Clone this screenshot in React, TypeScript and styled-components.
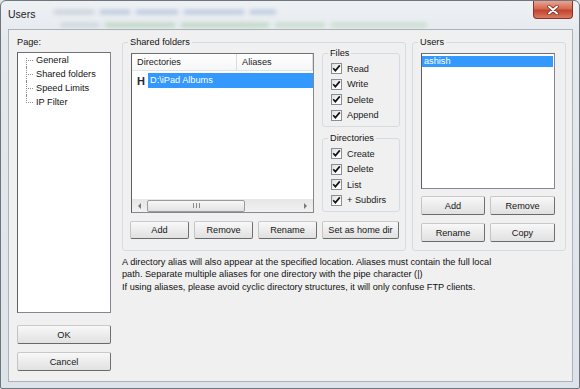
import React from 'react'
import styled, { createGlobalStyle } from 'styled-components'

const GlobalStyle = createGlobalStyle`
  html, body {
    margin: 0;
    padding: 0;
    background: #dfe5ea;
  }
  body {
    font-family: "Liberation Sans", Arial, sans-serif;
    font-size: 9.2px;
    color: #141414;
  }
  * {
    box-sizing: border-box;
  }
`

const Frame = styled.div`
  width: 580px;
  height: 389px;
  border: 1px solid #6f757c;
  border-radius: 6px 6px 2px 2px;
  background: linear-gradient(#eef1f4, #e4e9ee 40px, #dde3e8);
  display: flex;
  flex-direction: column;
  padding: 0 6px 6px 7px;
  overflow: hidden;
`

const TitleBar = styled.div`
  height: 28px;
  flex: none;
  display: flex;
  align-items: flex-start;
`

const Title = styled.div`
  padding-top: 7px;
  font-size: 10.5px;
  line-height: 12px;
  color: #1b1b1b;
`

const Haze = styled.div`
  display: flex;
  flex-direction: column;
  gap: 9px;
  margin-left: 19px;
  padding-top: 9px;
  filter: blur(2px);
  opacity: 0.55;
`

const HazeLine = styled.div<{ indent: number }>`
  display: flex;
  gap: 6px;
  margin-left: ${p => p.indent}px;
`

const HazeBit = styled.span<{ w: number; c: string }>`
  width: ${p => p.w}px;
  height: 4px;
  background: ${p => p.c};
`

const CloseButton = styled.div`
  margin-left: auto;
  width: 40px;
  height: 18px;
  border: 1px solid #8b3426;
  border-top: none;
  border-radius: 0 0 4px 4px;
  background: linear-gradient(#e9a594, #d46a53 45%, #c4432d 55%, #d77a62);
  display: flex;
  align-items: center;
  justify-content: center;
`

const Client = styled.div`
  flex: 1;
  display: flex;
  gap: 11px;
  background: #f0f0f0;
  border: 1px solid #aab3bb;
  padding: 6px 6px 0 8px;
`

const LeftCol = styled.div`
  width: 94px;
  flex: none;
  display: flex;
  flex-direction: column;
`

const Label = styled.div`
  line-height: 12px;
`

const Sunken = styled.div`
  background: #fff;
  border: 1px solid #828790;
  border-left-color: #5d6167;
  border-top-color: #6d7178;
`

const TreeBox = styled(Sunken)`
  margin-top: 4px;
  height: 261px;
  padding: 0 0 0 8px;
`

const TreeItem = styled.div`
  position: relative;
  height: 14px;
  line-height: 14px;
  padding-left: 10px;
  white-space: nowrap;
  &::before {
    content: "";
    position: absolute;
    left: 0;
    top: 7px;
    width: 7px;
    border-top: 1px dotted #8c8c8c;
  }
  &::after {
    content: "";
    position: absolute;
    left: 0;
    top: 0;
    height: 14px;
    border-left: 1px dotted #8c8c8c;
  }
  &:first-child::after {
    top: 5px;
    height: 9px;
  }
  &:last-child::after {
    height: 8px;
  }
`

const Button = styled.div<{ w?: number; h?: number }>`
  width: ${p => (p.w ? `${p.w}px` : '100%')};
  height: ${p => p.h || 18}px;
  flex: none;
  display: flex;
  align-items: center;
  justify-content: center;
  border: 1px solid;
  border-color: #c9c9c9 #6f6f6f #6a6a6a #c4c4c4;
  border-radius: 2px;
  background: linear-gradient(#f8f8f8, #ececec 50%, #e1e1e1);
  color: #161616;
  white-space: nowrap;
`

const OkButton = styled(Button)`
  margin-top: 12px;
`

const CancelButton = styled(Button)`
  margin-top: 8px;
`

const RightCol = styled.div`
  flex: 1;
  display: flex;
  flex-direction: column;
`

const TopRow = styled.div`
  display: flex;
  gap: 6px;
`

const Group = styled.fieldset<{ w: number }>`
  width: ${p => p.w}px;
  min-width: 0;
  margin: 0;
  border: 1px solid #d3dce2;
  border-radius: 3px;
  padding: 5px 5px 8px 8px;
`

const Legend = styled.legend`
  line-height: 12px;
  padding: 0 2px;
  margin-left: -3px;
  color: #141414;
`

const SharedInner = styled.div`
  display: flex;
  align-items: flex-start;
  gap: 8px;
`

const ListView = styled(Sunken)`
  width: 183px;
  height: 160px;
  display: flex;
  flex-direction: column;
`

const Header = styled.div`
  display: flex;
  height: 17px;
  flex: none;
  border-bottom: 1px solid #e3e3e3;
  background: linear-gradient(#ffffff, #f6f7f8);
`

const HeaderCell = styled.div<{ w?: number }>`
  ${p => (p.w ? `width: ${p.w}px;` : 'flex: 1;')}
  padding-left: 5px;
  line-height: 16px;
  color: #222;
  border-right: 1px solid #dcdcdc;
`

const DirRow = styled.div`
  display: flex;
  align-items: center;
  height: 15px;
  margin-top: 2px;
`

const HomeMark = styled.span`
  width: 16px;
  padding-left: 5px;
  font-size: 11px;
  font-weight: bold;
  color: #1d2a3a;
`

const Selected = styled.div`
  flex: 1;
  height: 15px;
  line-height: 15px;
  padding-left: 2px;
  background: #3399ff;
  color: #fff;
  white-space: nowrap;
`

const HScroll = styled.div`
  margin-top: auto;
  height: 13px;
  flex: none;
  display: flex;
  align-items: center;
  background: linear-gradient(#e6e6e6, #f1f1f1);
`

const Arrow = styled.div<{ dir: 'left' | 'right' }>`
  width: 15px;
  height: 13px;
  display: flex;
  align-items: center;
  justify-content: center;
  ${p => (p.dir === 'right' ? 'margin-left: auto;' : '')}
  &::before {
    content: "";
    border-top: 3px solid transparent;
    border-bottom: 3px solid transparent;
    ${p =>
      p.dir === 'left'
        ? 'border-right: 3px solid #7a7a7a;'
        : 'border-left: 3px solid #7a7a7a;'}
  }
`

const Thumb = styled.div`
  width: 98px;
  height: 12px;
  border: 1px solid #9b9b9b;
  border-radius: 2px;
  background: linear-gradient(#f7f7f7, #e2e2e2);
  display: flex;
  align-items: center;
  justify-content: center;
  gap: 2px;
`

const Grip = styled.span`
  width: 1px;
  height: 5px;
  background: #8a8a8a;
`

const SideCol = styled.div`
  width: 78px;
  margin-top: -6px;
  display: flex;
  flex-direction: column;
  gap: 5px;
`

const SmallGroup = styled.fieldset`
  min-width: 0;
  margin: 0;
  border: 1px solid #d3dce2;
  border-radius: 3px;
  padding: 2px 2px 3px 8px;
`

const CheckRow = styled.div`
  display: flex;
  align-items: center;
  gap: 5px;
  height: 15.5px;
  white-space: nowrap;
  color: #1a1a1a;
`

const Box = styled.span`
  width: 11px;
  height: 11px;
  flex: none;
  border: 1px solid #8a8d91;
  background: linear-gradient(135deg, #dadde0, #ffffff 70%);
  display: flex;
  align-items: center;
  justify-content: center;
`

const ButtonRow = styled.div<{ top: number; gap: number }>`
  display: flex;
  gap: ${p => p.gap}px;
  margin-top: ${p => p.top}px;
`

const SharedButtons = styled(ButtonRow)`
  margin-left: -1px;
`

const UserList = styled(Sunken)`
  width: 134px;
  height: 136px;
  padding: 2px 1px 0 0;
`

const UserItem = styled.div`
  height: 11px;
  line-height: 11px;
  padding-left: 2px;
  background: #3399ff;
  color: #fff;
`

const Notes = styled.div`
  margin-top: 5px;
  width: 385px;
  line-height: 12px;
  color: #111;
`

const NoteLine = styled.p<{ top?: number }>`
  margin: ${p => p.top || 0}px 0 0 0;
`

const Check: React.FC<{ text: string }> = ({ text }) => (
  <CheckRow>
    <Box>
      <svg width="9" height="9" viewBox="0 0 9 9">
        <path d="M1.2 4.2 L3.4 6.6 L7.8 1.4" stroke="#151515" strokeWidth="1.7" fill="none" />
      </svg>
    </Box>
    {text}
  </CheckRow>
)

const App: React.FC = () => {
  return (
    <>
      <GlobalStyle />
      <Frame>
        <TitleBar>
          <Title>Users</Title>
          <Haze>
            <HazeLine indent={0}>
              <HazeBit w={40} c="#a7b5c4" />
              <HazeBit w={30} c="#8aa3cc" />
              <HazeBit w={42} c="#8aa3cc" />
              <HazeBit w={60} c="#8aa3cc" />
              <HazeBit w={26} c="#8aa3cc" />
            </HazeLine>
            <HazeLine indent={7}>
              <HazeBit w={38} c="#b1c0cc" />
              <HazeBit w={70} c="#94c294" />
              <HazeBit w={88} c="#94c294" />
              <HazeBit w={50} c="#a6cba6" />
              <HazeBit w={96} c="#a6cbad" />
            </HazeLine>
          </Haze>
          <CloseButton>
            <svg width="12" height="10" viewBox="0 0 12 10">
              <path d="M2 1.5 L10 8.5 M10 1.5 L2 8.5" stroke="#6e2418" strokeWidth="3.4" strokeLinecap="round" />
              <path d="M2 1.5 L10 8.5 M10 1.5 L2 8.5" stroke="#ffffff" strokeWidth="2" strokeLinecap="round" />
            </svg>
          </CloseButton>
        </TitleBar>
        <Client>
          <LeftCol>
            <Label>Page:</Label>
            <TreeBox>
              <TreeItem>General</TreeItem>
              <TreeItem>Shared folders</TreeItem>
              <TreeItem>Speed Limits</TreeItem>
              <TreeItem>IP Filter</TreeItem>
            </TreeBox>
            <OkButton h={19}>OK</OkButton>
            <CancelButton h={19}>Cancel</CancelButton>
          </LeftCol>
          <RightCol>
            <TopRow>
              <Group w={284}>
                <Legend>Shared folders</Legend>
                <SharedInner>
                  <ListView>
                    <Header>
                      <HeaderCell w={105}>Directories</HeaderCell>
                      <HeaderCell>Aliases</HeaderCell>
                    </Header>
                    <DirRow>
                      <HomeMark>H</HomeMark>
                      <Selected>D:\iPad Albums</Selected>
                    </DirRow>
                    <HScroll>
                      <Arrow dir="left" />
                      <Thumb>
                        <Grip />
                        <Grip />
                        <Grip />
                      </Thumb>
                      <Arrow dir="right" />
                    </HScroll>
                  </ListView>
                  <SideCol>
                    <SmallGroup>
                      <Legend>Files</Legend>
                      <Check text="Read" />
                      <Check text="Write" />
                      <Check text="Delete" />
                      <Check text="Append" />
                    </SmallGroup>
                    <SmallGroup>
                      <Legend>Directories</Legend>
                      <Check text="Create" />
                      <Check text="Delete" />
                      <Check text="List" />
                      <Check text="+ Subdirs" />
                    </SmallGroup>
                  </SideCol>
                </SharedInner>
                <SharedButtons top={8} gap={5}>
                  <Button w={59}>Add</Button>
                  <Button w={59}>Remove</Button>
                  <Button w={59}>Rename</Button>
                  <Button w={77}>Set as home dir</Button>
                </SharedButtons>
              </Group>
              <Group w={154}>
                <Legend>Users</Legend>
                <UserList>
                  <UserItem>ashish</UserItem>
                </UserList>
                <ButtonRow top={7} gap={5}>
                  <Button w={64} h={19}>Add</Button>
                  <Button w={65} h={19}>Remove</Button>
                </ButtonRow>
                <ButtonRow top={8} gap={5}>
                  <Button w={64} h={19}>Rename</Button>
                  <Button w={65} h={19}>Copy</Button>
                </ButtonRow>
              </Group>
            </TopRow>
            <Notes>
              <NoteLine>
                A directory alias will also appear at the specified location. Aliases must contain the full local
                path. Separate multiple aliases for one directory with the pipe character (|)
              </NoteLine>
              <NoteLine top={1}>
                If using aliases, please avoid cyclic directory structures, it will only confuse FTP clients.
              </NoteLine>
            </Notes>
          </RightCol>
        </Client>
      </Frame>
    </>
  )
}

export default App
